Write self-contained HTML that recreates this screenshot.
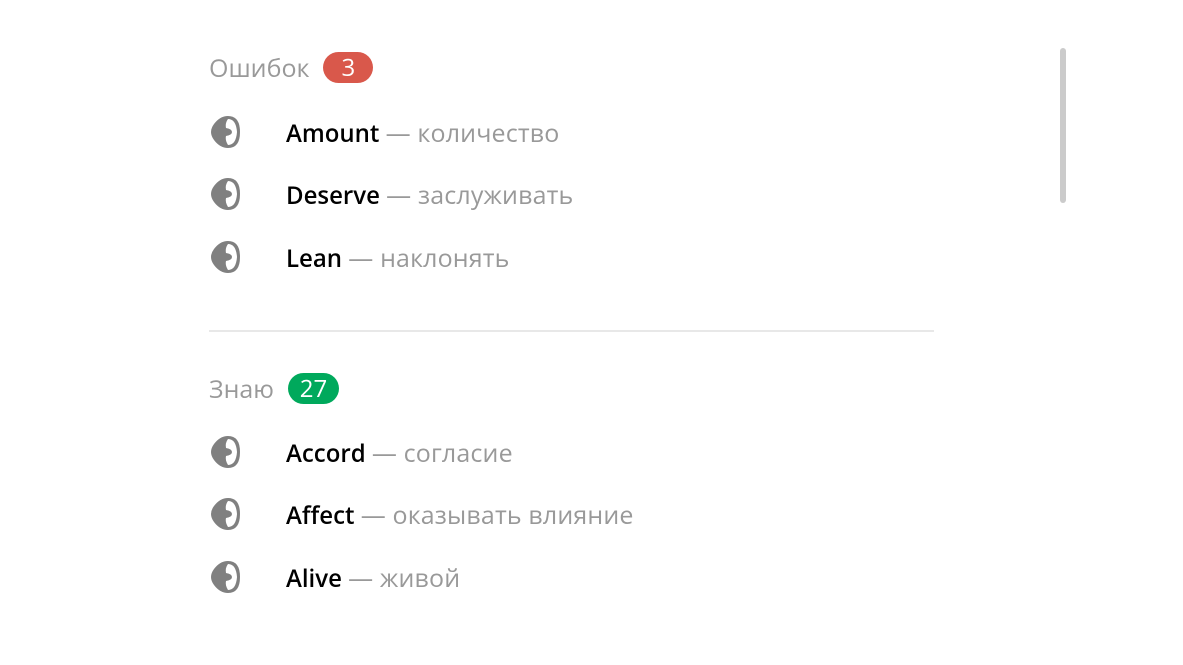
<!DOCTYPE html>
<html><head><meta charset="utf-8"><style>
body{margin:0;width:1183px;height:665px;background:#fff;font-family:"Open Sans","Liberation Sans",sans-serif;position:relative;overflow:hidden}
.h{position:absolute;left:209px;font-size:25px;color:#999;line-height:32px}
.b{display:inline-block;color:#fff;border-radius:16px;text-align:center;height:31px;line-height:31px;font-size:24px;vertical-align:top;margin-left:14px}
.r{position:absolute;left:209px;height:34px;line-height:34px;font-size:25px}
.r svg{position:absolute;left:2px;top:0px}
.r span.w{position:absolute;left:77px;white-space:nowrap;color:#000;font-weight:600;font-size:24px}
.r span.t{color:#999;font-weight:400;font-size:25px;letter-spacing:0.15px}
.sb{position:absolute;left:1060px;top:48px;width:6px;height:155px;background:#cbcbcb;border-radius:3px}
.hr{position:absolute;left:209px;top:330px;width:725px;height:2px;background:#e8e8e8}
</style></head><body>
<svg width="0" height="0" style="position:absolute"><defs><g id="i"><path d="M3 8Q9 0 17 0Q29 0 29 16Q29 32 17 32Q9 32 3 24Q0 20 0 16Q0 12 3 8Z" fill="#808080"/><path d="M17 3Q25 3 26 16Q25 29 17 29Q14 24 15 20Q21 19 21 16Q21 13 15 12Q14 7 17 3Z" fill="#fff"/></g></defs></svg>
<div class="h" style="top:52px">Ошибок<span class="b" style="background:#d9584b;width:50px">3</span></div>
<div class="r" style="top:116px"><svg width="30" height="32"><use href="#i"/></svg><span class="w">Amount <span class="t">— количество</span></span></div>
<div class="r" style="top:178px"><svg width="30" height="32"><use href="#i"/></svg><span class="w">Deserve <span class="t">— заслуживать</span></span></div>
<div class="r" style="top:241px"><svg width="30" height="32"><use href="#i"/></svg><span class="w">Lean <span class="t">— наклонять</span></span></div>
<div class="hr"></div>
<div class="h" style="top:373px">Знаю<span class="b" style="background:#00a95c;width:51px">27</span></div>
<div class="r" style="top:436px"><svg width="30" height="32"><use href="#i"/></svg><span class="w">Accord <span class="t">— согласие</span></span></div>
<div class="r" style="top:498px"><svg width="30" height="32"><use href="#i"/></svg><span class="w">Affect <span class="t">— оказывать влияние</span></span></div>
<div class="r" style="top:561px"><svg width="30" height="32"><use href="#i"/></svg><span class="w">Alive <span class="t">— живой</span></span></div>
<div class="sb"></div>
</body></html>
